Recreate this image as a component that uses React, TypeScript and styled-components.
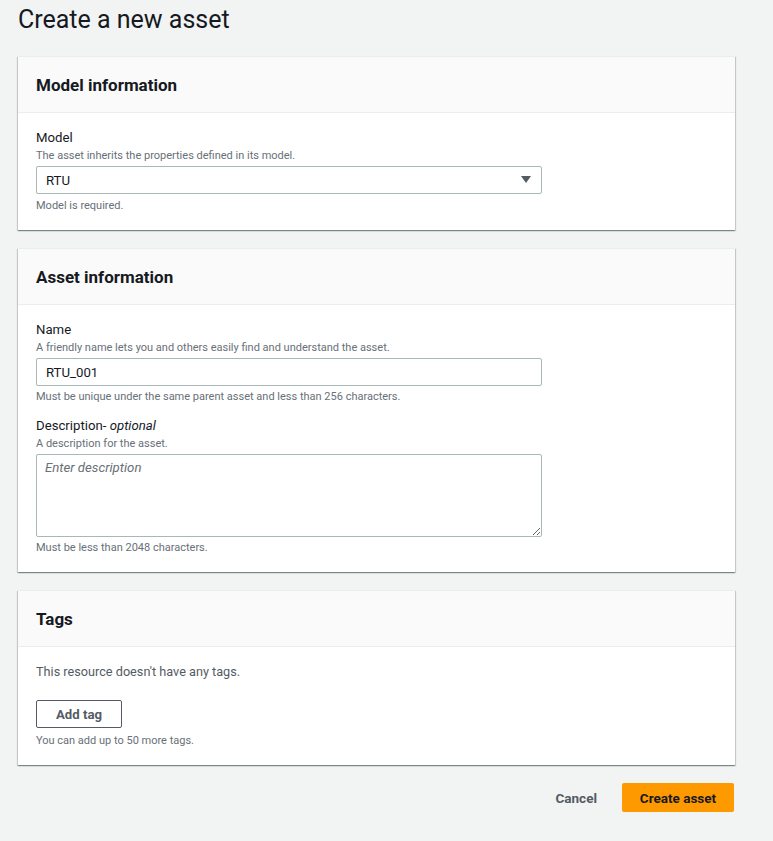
import React from "react";
import styled, { createGlobalStyle } from "styled-components";

const Global = createGlobalStyle`
  html, body { margin: 0; padding: 0; background: #f2f3f3; }
  body { font-family: Roboto, "Noto Sans", Arial, sans-serif; color: #16191f; }
  * { box-sizing: border-box; }
`;

const Page = styled.div`
  width: 717px;
  margin-left: 18px;
  padding-bottom: 29px;
`;

const Title = styled.h1`
  margin: 0;
  height: 56px;
  padding-top: 4px;
  font-size: 25px;
  line-height: 32px;
  font-weight: 400;
  color: #16191f;
`;

const Card = styled.section`
  background: #fff;
  border-top: 1px solid #eaeded;
  box-shadow: 0 1px 1px 0 rgba(0, 28, 36, 0.3), 1px 1px 1px 0 rgba(0, 28, 36, 0.15),
    -1px 1px 1px 0 rgba(0, 28, 36, 0.15);
  margin-bottom: 18px;
`;

const CardHeader = styled.header`
  height: 56px;
  background: #fafafa;
  border-bottom: 1px solid #eaeded;
  display: flex;
  align-items: center;
  padding: 0 18px;
  font-size: 17px;
  font-weight: 700;
  color: #16191f;
`;

const CardBody = styled.div`
  padding: 15px 18px 16px;
  display: flex;
  flex-direction: column;
`;

const Field = styled.div<{ $gap?: number }>`
  display: flex;
  flex-direction: column;
  margin-top: ${(p) => p.$gap ?? 0}px;
`;

const Label = styled.label`
  font-size: 13.2px;
  line-height: 20px;
  color: #16191f;
  em { font-style: italic; }
`;

const Hint = styled.div<{ $top?: number }>`
  font-size: 11px;
  line-height: 16px;
  color: #687078;
  margin-top: ${(p) => p.$top ?? 0}px;
`;

const Control = styled.div`
  position: relative;
  width: 506px;
  margin-top: 2px;
`;

const Input = styled.input`
  width: 100%;
  height: 28px;
  border: 1px solid #aab7b8;
  border-radius: 2px;
  padding: 0 9px;
  font-family: inherit;
  font-size: 13.2px;
  color: #16191f;
  background: #fff;
  outline: none;
`;

const Select = styled.select`
  width: 100%;
  height: 28px;
  border: 1px solid #aab7b8;
  border-radius: 2px;
  padding: 0 9px;
  font-family: inherit;
  font-size: 13.2px;
  color: #16191f;
  background: #fff;
  appearance: none;
  -webkit-appearance: none;
  outline: none;
`;

const Caret = styled.svg`
  position: absolute;
  right: 11px;
  top: 10px;
  pointer-events: none;
`;

const TextArea = styled.textarea`
  display: block;
  width: 100%;
  height: 83px;
  border: 1px solid #aab7b8;
  border-radius: 2px;
  padding: 5px 8px;
  font-family: inherit;
  font-size: 13.2px;
  color: #16191f;
  background: #fff;
  outline: none;
  resize: vertical;
  &::placeholder { color: #687078; font-style: italic; }
`;

const Empty = styled.div`
  font-size: 12.7px;
  line-height: 20px;
  color: #545b64;
`;

const SecondaryButton = styled.button`
  align-self: flex-start;
  margin-top: 18px;
  height: 28px;
  width: 86px;
  border: 1px solid #545b64;
  border-radius: 2px;
  background: #fff;
  color: #545b64;
  font-family: inherit;
  font-size: 13.2px;
  font-weight: 700;
`;

const Footer = styled.div`
  display: flex;
  justify-content: flex-end;
  align-items: center;
  gap: 5px;
  padding-right: 1px;
`;

const LinkButton = styled.button`
  border: none;
  background: transparent;
  padding: 0 20px;
  height: 29px;
  font-family: inherit;
  font-size: 13.5px;
  font-weight: 700;
  color: #545b64;
`;

const PrimaryButton = styled.button`
  border: none;
  background: #ff9900;
  border-radius: 2px;
  height: 29px;
  width: 112px;
  font-family: inherit;
  font-size: 13.5px;
  font-weight: 700;
  color: #16191f;
`;

export default function App() {
  return (
    <>
      <Global />
      <Page>
        <Title>Create a new asset</Title>

        <Card>
          <CardHeader>Model information</CardHeader>
          <CardBody>
            <Field>
              <Label>Model</Label>
              <Hint>The asset inherits the properties defined in its model.</Hint>
              <Control>
                <Select defaultValue="RTU">
                  <option value="RTU">RTU</option>
                </Select>
                <Caret width="10" height="8" viewBox="0 0 10 8">
                  <path d="M0 0 H10 L5 7 Z" fill="#545b64" />
                </Caret>
              </Control>
              <Hint $top={4}>Model is required.</Hint>
            </Field>
          </CardBody>
        </Card>

        <Card>
          <CardHeader>Asset information</CardHeader>
          <CardBody>
            <Field>
              <Label>Name</Label>
              <Hint>A friendly name lets you and others easily find and understand the asset.</Hint>
              <Control>
                <Input defaultValue="RTU_001" />
              </Control>
              <Hint $top={3}>Must be unique under the same parent asset and less than 256 characters.</Hint>
            </Field>
            <Field $gap={11}>
              <Label>
                Description- <em>optional</em>
              </Label>
              <Hint>A description for the asset.</Hint>
              <Control>
                <TextArea placeholder="Enter description" />
              </Control>
              <Hint $top={3}>Must be less than 2048 characters.</Hint>
            </Field>
          </CardBody>
        </Card>

        <Card>
          <CardHeader>Tags</CardHeader>
          <CardBody>
            <Empty>This resource doesn't have any tags.</Empty>
            <SecondaryButton>Add tag</SecondaryButton>
            <Hint $top={5}>You can add up to 50 more tags.</Hint>
          </CardBody>
        </Card>

        <Footer>
          <LinkButton>Cancel</LinkButton>
          <PrimaryButton>Create asset</PrimaryButton>
        </Footer>
      </Page>
    </>
  );
}
